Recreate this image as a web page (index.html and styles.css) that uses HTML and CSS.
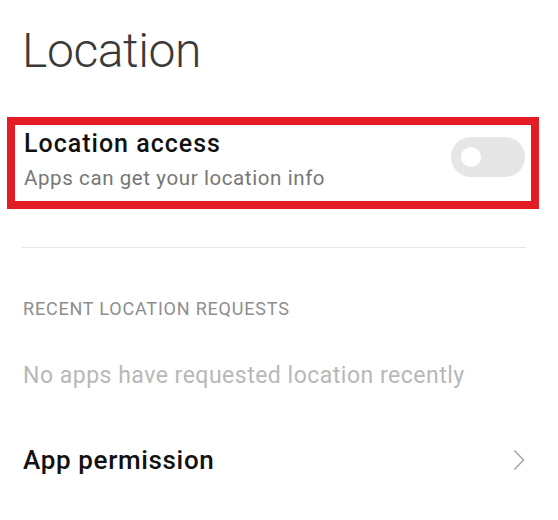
FILE: index.html
```html
<!DOCTYPE html>
<html lang="en">
<head>
  <meta charset="UTF-8">
  <meta name="viewport" content="width=device-width, initial-scale=1.0">
  <title>Location</title>
  <link rel="stylesheet" href="styles.css">
</head>
<body>
  <div class="page">
    <h1 class="page-title">Location</h1>

    <div class="highlight">
      <div class="setting-row">
        <div class="setting-text">
          <div class="setting-name">Location access</div>
          <div class="setting-desc">Apps can get your location info</div>
        </div>
        <div class="toggle"><span class="knob"></span></div>
      </div>
    </div>

    <hr class="divider">

    <div class="section-label">RECENT LOCATION REQUESTS</div>
    <div class="empty-note">No apps have requested location recently</div>

    <div class="nav-row">
      <span class="nav-name">App permission</span>
      <svg class="chevron" width="12" height="22" viewBox="0 0 12 22">
        <path d="M1.5 1.5 L10.5 11 L1.5 20.5" fill="none" stroke="#a8a8a8" stroke-width="1.6"/>
      </svg>
    </div>
  </div>
</body>
</html>
```

FILE: styles.css
```css
body {
  margin: 0;
  padding: 0;
  background: #fff;
  font-family: Roboto, "Liberation Sans", Arial, sans-serif;
}
.page {
  padding: 23px 32px 0 23px;
}
.page-title {
  margin: 0 0 0 -1px;
  font-size: 48px;
  font-weight: 300;
  line-height: 56px;
  letter-spacing: -0.4px;
  color: #3a3a3a;
}
.highlight {
  margin: 38px -13px 0 -16px;
  border: 8px solid #e31c25;
}
.setting-row {
  display: flex;
  justify-content: space-between;
  align-items: flex-start;
  padding: 4px 6px 9px 9px;
}
.setting-name {
  font-size: 25px;
  font-weight: 500;
  line-height: 30px;
  letter-spacing: 1px;
  color: #111;
}
.setting-desc {
  margin-top: 5px;
  font-size: 20.5px;
  line-height: 28px;
  letter-spacing: 0.6px;
  color: #777;
}
.toggle {
  margin-top: 8px;
  width: 74px;
  height: 40px;
  border-radius: 20px;
  background: #e6e6e6;
  display: flex;
  align-items: center;
  padding-left: 10px;
  box-sizing: border-box;
}
.knob {
  width: 20px;
  height: 20px;
  border-radius: 50%;
  background: #fff;
}
.divider {
  margin: 38px 0 0 -1px;
  border: none;
  border-top: 1px solid #e8e8e8;
}
.section-label {
  margin-top: 49px;
  font-size: 18px;
  line-height: 24px;
  letter-spacing: 0.8px;
  color: #8e8e8e;
}
.empty-note {
  margin-top: 40px;
  font-size: 23px;
  line-height: 30px;
  letter-spacing: 0.5px;
  color: #b8b8b8;
}
.nav-row {
  margin-top: 53px;
  display: flex;
  justify-content: space-between;
  align-items: center;
}
.nav-name {
  font-size: 26px;
  font-weight: 500;
  line-height: 32px;
  letter-spacing: 0.65px;
  color: #111;
}
.chevron {
  display: block;
  margin-right: 1px;
}
```
